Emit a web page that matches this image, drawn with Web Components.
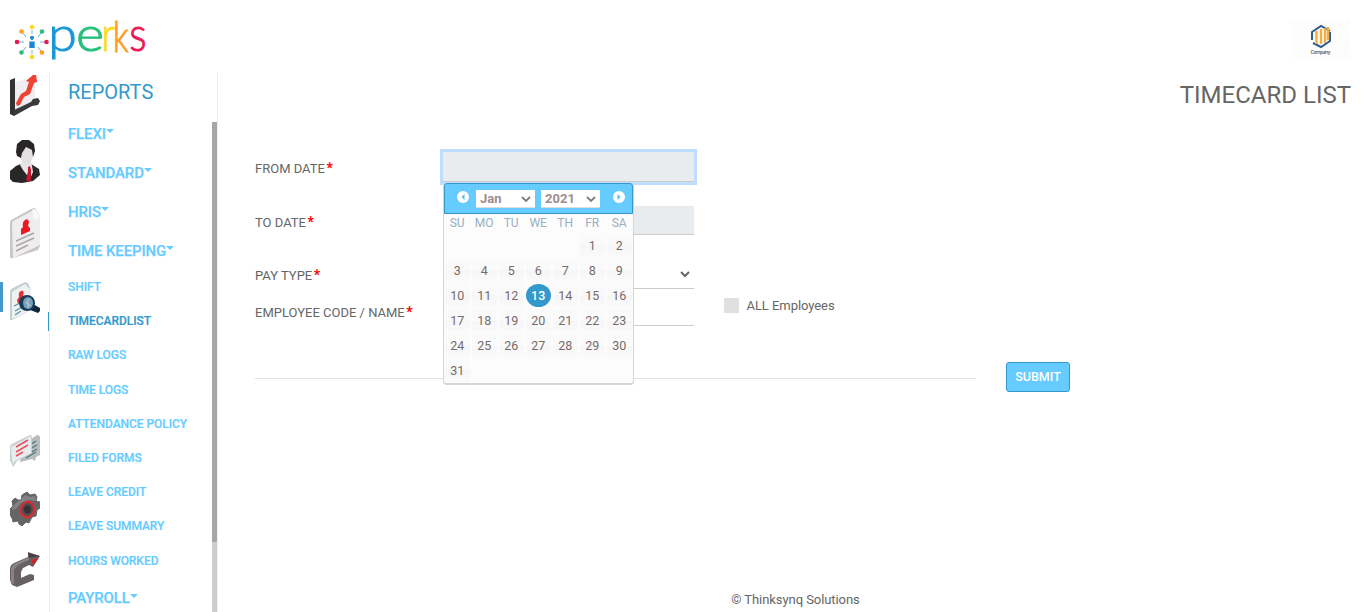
<!DOCTYPE html>
<html lang="en">
<head>
<meta charset="utf-8">
<title>Timecard List</title>
<style>
html,body{margin:0;height:100%;overflow:hidden;background:#fff}
body{font-family:Roboto,"Liberation Sans",sans-serif;color:#666;font-size:13px}
</style>
</head>
<body>
<perks-app></perks-app>
<script>
function define(name, html, setup) {
  const t = document.createElement('template');
  t.innerHTML = html;
  customElements.define(name, class extends HTMLElement {
    connectedCallback() {
      if (this.shadowRoot) return;
      const root = this.attachShadow({mode: 'open'});
      root.append(t.content.cloneNode(true));
      if (setup) setup(root, this);
    }
  });
}

define('perks-logo', `
<style>:host{display:block;width:150px;height:46px}svg{display:block;overflow:visible}text{font-family:Lato,sans-serif;font-weight:300;font-size:48px}</style>
<svg width="150" height="62" viewBox="12 17 150 62">
  <g stroke="#70b5dc" stroke-width="1"><path d="M32 30v4M32 50v4M19 42h5M40 42h5M23 33l3 4M41 33l-3 4M23 51l3-4M41 51l-3-4"/></g>
  <g><circle cx="32" cy="27" r="2.300" fill="#fcd820"/><circle cx="42" cy="31.500" r="2.300" fill="#2bbf7b"/><circle cx="46.500" cy="42" r="2.300" fill="#e81b55"/><circle cx="42" cy="52.500" r="2.300" fill="#ff9f1a"/><circle cx="32" cy="57" r="2.300" fill="#fcd820"/><circle cx="21.500" cy="52.500" r="2.300" fill="#2bbf7b"/><circle cx="17" cy="42" r="2.300" fill="#e81b55"/><circle cx="21.500" cy="31.500" r="2.300" fill="#ff9f1a"/></g>
  <circle cx="32" cy="37.800" r="2.100" fill="#1c87d2"/><path d="M29.300 41.500h5.400V48h-5.400z" fill="#1c87d2"/>
  <g stroke-width="1"><text transform="translate(48.200 51.300) scale(1.080 1)" fill="#1a97d8" stroke="#1a97d8">p</text>
  <text transform="translate(76 51.300) scale(1.120 1)" fill="#27c07c" stroke="#27c07c">e</text>
  <text transform="translate(101.500 51.300) scale(.8 1)" fill="#fddb1f" stroke="#fddb1f">r</text>
  <text transform="translate(113 51.500) scale(.75 1)" style="font-size:43.500px" fill="#ff9b1a" stroke="#ff9b1a">k</text>
  <text transform="translate(129.300 51.300) scale(.85 1)" fill="#ea1a54" stroke="#ea1a54">s</text></g>
</svg>`);

define('company-badge', `
<style>:host{display:block;width:59px;height:39px;background:#fdfdfd}svg{display:block}text{font:5px "Open Sans",sans-serif;font-weight:600;fill:#53536c}</style>
<svg width="59" height="39" viewBox="0 0 59 39">
 <path d="M0 10L10 0M10 30L40 0M20 38L58 0M45 38L58 25" stroke="#f8f8f8"/>
 <path d="M21 20v-8l9-6 9 5M39 12v9l-9 6-8-4" fill="none" stroke="#315d8d" stroke-width="2"/>
 <path d="M25.500 11v13M30 9v15M34 8v15M37 7v13" stroke="#f5ae3d" stroke-width="2.400"/>
 <text x="19.500" y="34.300" textLength="20">Company</text>
</svg>`);

define('rail-icon', `
<style>:host{display:block;width:30px;position:relative}::slotted(svg){display:block}
:host([active])::before{content:"";position:absolute;left:-10px;top:0;width:3px;height:30px;background:#4599ca}</style><slot></slot>`);

define('icon-rail', `
<style>:host{display:flex;flex-direction:column;box-sizing:border-box;width:50px;border-right:1px solid #eee;padding:2px 0 0 10px}
rail-icon{flex:none}</style>
<rail-icon style="height:65px"><svg width="30" height="41" viewBox="0 0 30 41">
 <path d="M5 7l20-5v26L5 36z" fill="#efeff1"/><path d="M0 5l5-2v32l-1 6-4-2z" fill="#333"/><path d="M4 35l17-8 2-3 5-1 2 3-2 4-6 1-18 10z" fill="#3c393c"/><path d="M7 31l-1-3 5-9 5-3 3-9-3-1 7-6 3-1 1 8-3 1-4 11-6 3-4 8z" fill="#ef4134"/>
</svg></rail-icon>
<rail-icon style="height:68px"><svg width="30" height="43" viewBox="0 0 30 43">
 <path d="M0 39v-8l6-5 7-3 8 1 8 5 1 6-7 6-11 2-9-1z" fill="#292627"/><path d="M12 21l9-1 2 12-3 7-7-9-3-5z" fill="#e9e5e7"/><path d="M8 9l4-3 11 4v8l-3 5-4 1-5-4z" fill="#e4dfe1"/><path d="M6 12L7 4l5-4 7 0 5 4 1 7-2 6-1-7-6-3-4 6-1 5-4-2z" fill="#292627"/><path d="M18 27l2-1 1 4v10l-2 2-3-2 2-9z" fill="#c1182e"/>
</svg></rail-icon>
<rail-icon style="height:74px"><svg width="30" height="51" viewBox="0 0 30 51">
 <path d="M0 15q0-3 3-4L21 1l4-1 5 9v29l-2 4L3 50q-3 1-3-2z" fill="#c9c6c7"/><path d="M2 16q0-3 3-4l17-9 8 6v28L3 50z" fill="#efedee"/><path d="M22 2l2 10 6-3-5-8z" fill="#fafafa"/><path d="M11 21l2-2q-1-5 2-7t4 2l-1 4 2 2v3l-9 4z" fill="#ee1724"/><path d="M6 33l18-8M6 38l18-8M6 43l12-6" stroke="#aaa6a9" stroke-width="1.500"/>
</svg></rail-icon>
<rail-icon active style="height:152px"><svg width="30" height="38" viewBox="0 0 30 38">
 <path d="M0 10q0-3 3-4L15 0l3 1 3 7v20L2 38H0z" fill="#c5ced1"/><path d="M2 12q0-3 3-4l10-6 6 6v20L2 37z" fill="#eff1f1"/><path d="M7 18l2-3q-1-5 2-6 4-1 2 5l3 1v3l-8 4z" fill="#e53033"/><path d="M4 24l8-4M5 29l7-4M5 33l6-4" stroke="#4f94a5" stroke-width="1.200"/><path d="M20 25l3-3 7 4v3l-2 2-8-3z" fill="#10283c"/><circle cx="17" cy="21" r="8" fill="#173b58"/><ellipse cx="18" cy="21" rx="5" ry="6" fill="#7b9eb6"/><path d="M18 17v9M15 20l6 4" stroke="#b9d0dd"/>
</svg></rail-icon>
<rail-icon style="height:58px"><svg width="30" height="34" viewBox="0 0 30 34">
 <path d="M12 11L27 1q3 0 3 3v17l-4 2-1 4-3-2-12 3z" fill="#b9bcbd"/><path d="M20 11l6-4M20 15l7-4M20 19l7-4M16 24l10-6" stroke="#557582" stroke-width="1.300"/><path d="M0 12l2-2L20 1q2 0 2 2v16L7 27l-4 6-2-5-1-1z" fill="#c8ced0"/><path d="M1 13L21 2v17L5 27l-2 3-1-4z" fill="#e7edef"/><path d="M6 13l12-7M6 18l12-7M6 22l7-4" stroke="#ef4d5c" stroke-width="1.500"/>
</svg></rail-icon>
<rail-icon style="height:60px"><svg width="30" height="34" viewBox="0 0 30 34">
 <path d="M8 8l3 0 1-5 5-3 3 3 5-1 2 3-1 4 4 1v6l-3 2-1 6-4 1-3 6-3-1-4 4-3-2-1-3-5 1-1-4-2-3V17l3-3-1-5 3-3z" fill="#676466" stroke="#676466" stroke-linejoin="round"/><path d="M11 7l4-4 5 2 5-1 1 5-8-1-7 3-5 6-5 1 4-6z" fill="#858284"/><ellipse cx="17.500" cy="17.500" rx="6.500" ry="7.600" fill="#4f4b4e" stroke="#d82c34" stroke-width="2.200" transform="rotate(15 17.500 17.500)"/><ellipse cx="17.500" cy="17.500" rx="3.300" ry="4" fill="#343135"/>
</svg></rail-icon>
<rail-icon style="height:40px"><svg width="30" height="36" viewBox="0 0 30 36">
 <path d="M0 17q0-4 4-6l14-6V0l12 4-7 11-4-2-6 3-2 4v6l9-4 4 1v5L7 35l-5-2-2-5z" fill="#676063"/><path d="M1 16l3-4 15-7v3L8 13l-4 5v15l-3-4z" fill="#898184"/><path d="M18 1l12 3-11 2z" fill="#474044"/><path d="M29 5l-6 9-1-6z" fill="#d71f2c"/>
</svg></rail-icon>`);

define('menu-group', `
<style>:host{display:flex;align-items:center;height:39px;color:#6cf;font-size:15px;font-weight:500;letter-spacing:-.14px;-webkit-text-stroke:.25px #6cf}
i{width:0;height:0;border:4px solid transparent;border-top-color:#6cf;border-bottom:0;margin:-5px 0 0 0}</style><slot></slot><i></i>`);
define('menu-link', `
<style>:host{display:flex;align-items:center;height:34.220px;color:#6cf;font-size:12px;font-weight:500;letter-spacing:-.05px;position:relative;-webkit-text-stroke:.2px currentColor}
:host([current]){color:#39c}:host([current])::before{content:"";position:absolute;left:-20px;top:8px;width:1px;height:19px;background:#39c}</style><slot></slot>`);
define('side-menu', `
<style>:host{display:flex;flex-direction:column;box-sizing:border-box;width:168px;border-right:1px solid #eee;padding-left:18px}
h2{margin:0;height:49px;line-height:38px;font-size:20px;font-weight:400;color:#39c;flex:none}
.scroll{flex:1;display:flex;justify-content:space-between}
nav{margin-top:-8px}menu-link:first-of-type{margin-top:-.220px}menu-group:last-child{margin-top:1px}
.bar{width:5px;background:#cdcdcd}.thumb{height:420px;background:#a6a6a6}</style>
<h2>REPORTS</h2>
<div class="scroll"><nav>
<menu-group>FLEXI</menu-group><menu-group>STANDARD</menu-group><menu-group>HRIS</menu-group><menu-group>TIME KEEPING</menu-group>
<menu-link>SHIFT</menu-link><menu-link current>TIMECARDLIST</menu-link><menu-link>RAW LOGS</menu-link><menu-link>TIME LOGS</menu-link><menu-link>ATTENDANCE POLICY</menu-link><menu-link>FILED FORMS</menu-link><menu-link>LEAVE CREDIT</menu-link><menu-link>LEAVE SUMMARY</menu-link><menu-link>HOURS WORKED</menu-link>
<menu-group>PAYROLL</menu-group></nav><div class="bar"><div class="thumb"></div></div></div>`);

define('mini-select', `
<style>:host{display:flex;align-items:center;justify-content:space-between;box-sizing:border-box;width:59px;height:18px;background:#fff;padding:0 4px;color:#a08c8c;font-size:13px;font-weight:700;border-bottom:1px solid #ddd}svg{flex:none;margin-top:2px}</style>
<slot></slot><svg width="10" height="8" viewBox="0 0 10 8"><path d="M1 2l4 4 4-4" fill="none" stroke="#8a7777" stroke-width="1.800"/></svg>`);

define('date-picker', `
<style>:host{display:block;box-sizing:border-box;width:191px;height:202px;background:#fcfcfc;border:1px solid #d5d5d5;border-bottom-width:2px;border-radius:4px}
header{box-sizing:border-box;height:31px;margin:-1px 0 0;background:#6cf;border:1px solid #39c;border-radius:3px 3px 0 0;display:flex;align-items:center;padding:0 7px 0 12px}
header svg{flex:none;margin-top:-3px}mini-select:first-of-type{margin:0 6px 0 7px}mini-select:last-of-type{margin-right:13px}
.grid{display:grid;grid-template-columns:repeat(7,25px);column-gap:2px;text-align:center;margin-left:.7px}
.grid>*{height:23px;line-height:23px;margin-bottom:2px;font-size:12.500px;color:#776a6a}
.grid .w{height:20px;line-height:18px;margin:0;font-size:12px;color:#99afc4}
.grid .d{background:linear-gradient(#fafafa 50%,#f6f6f6 50%,#fafafa)}
.grid .t{background:#39c;color:#fff;border-radius:50%;font-weight:500}</style>
<header><svg width="12" height="12" viewBox="0 0 12 12"><circle cx="6" cy="6" r="6" fill="#fff"/><path d="M7.500 3v6L4.500 6z" fill="#5bbdef"/></svg><mini-select>Jan</mini-select><mini-select>2021</mini-select><svg width="12" height="12" viewBox="0 0 12 12"><circle cx="6" cy="6" r="6" fill="#fff"/><path d="M4.500 3v6L7.500 6z" fill="#5bbdef"/></svg></header>
<div class="grid"></div>`, root => {
  const g = root.querySelector('.grid');
  const add = (text, cls) => { const s = document.createElement('span'); s.className = cls; s.textContent = text; g.append(s); };
  ['SU','MO','TU','WE','TH','FR','SA'].forEach(d => add(d, 'w'));
  for (let i = 0; i < 5; i++) add('', 'e');
  for (let d = 1; d <= 31; d++) add(d, d === 13 ? 't' : 'd');
});

define('form-field', `
<style>:host{display:grid;grid-template-columns:188px 251px 1fr}
label{line-height:18px;align-self:start;white-space:nowrap;margin-top:8px}label b{color:#f00;margin-left:1.500px;font-size:14px;line-height:1}
.box{position:relative;box-sizing:border-box;border-bottom:1px solid #ccc}
:host([readonly]) .box{background:#e9ecef}
:host([focused]) .box{box-shadow:0 0 0 3px #bfdeff}
svg{position:absolute;right:4px;bottom:10px;display:none}:host([select]) svg{display:block}
::slotted(date-picker){position:absolute;left:0;top:31px;z-index:5}</style>
<label><span></span><b>*</b></label><div class="box"><svg width="10" height="8" viewBox="0 0 10 8"><path d="M1 2l4 4 4-4" fill="none" stroke="#666" stroke-width="2"/></svg><slot></slot></div><slot name="after"></slot>`,
(root, host) => { root.querySelector('span').textContent = host.getAttribute('label'); });

define('check-option', `
<style>:host{display:flex;align-items:center;gap:7.500px;height:20px;letter-spacing:-.06px}i{width:15px;height:15px;background:#e0e0e0}</style><i></i><slot></slot>`);
define('submit-button', `
<style>:host{display:block}button{display:block;box-sizing:border-box;width:64px;height:30px;padding:0 0 2px;border:1px solid #39c;border-radius:3px;background:#6cf;color:#fff;font:500 12.500px Roboto,sans-serif}</style><button><slot></slot></button>`);

define('timecard-page', `
<style>:host{display:flex;flex-direction:column;padding:0 15px 0 37px;min-width:0}
h1{margin:0;font-size:24px;font-weight:400;line-height:46px;height:80px;text-align:right;color:#666}
form-field{flex:none}
.f1{height:30px;margin-bottom:24px}.f2{height:29px;margin-bottom:24px}.f3{height:30px;margin-bottom:7px}.f4{height:30px}
check-option{margin:-1px 0 0 30px}
.end{display:flex;align-items:center;gap:30px;margin-top:36px;height:30px}.end hr{flex:none;width:721px;margin:2px 0 0;border:0;border-top:1px solid #e2e2e2}
footer{margin:199px -22px 0 -37px;text-align:center;line-height:18px;letter-spacing:-.07px}</style>
<h1>TIMECARD LIST</h1>
<form-field class="f1" label="FROM DATE" readonly focused><date-picker></date-picker></form-field>
<form-field class="f2" label="TO DATE" readonly></form-field>
<form-field class="f3" label="PAY TYPE" select></form-field>
<form-field class="f4" label="EMPLOYEE CODE / NAME"><check-option slot="after">ALL Employees</check-option></form-field>
<div class="end"><hr><submit-button>SUBMIT</submit-button></div>
<footer>© Thinksynq Solutions</footer>`);

define('perks-app', `
<style>:host{display:grid;grid-template:72px 1fr / 50px 168px 1fr;height:612px;overflow:hidden}
header{grid-column:1/-1;display:flex;justify-content:space-between;padding:17px 16px 0 12px}
company-badge{margin-top:3px}icon-rail,side-menu{margin-top:1px;min-height:0}
</style>
<header><perks-logo></perks-logo><company-badge></company-badge></header>
<icon-rail></icon-rail><side-menu></side-menu><timecard-page></timecard-page>`);
</script>
</body>
</html>
